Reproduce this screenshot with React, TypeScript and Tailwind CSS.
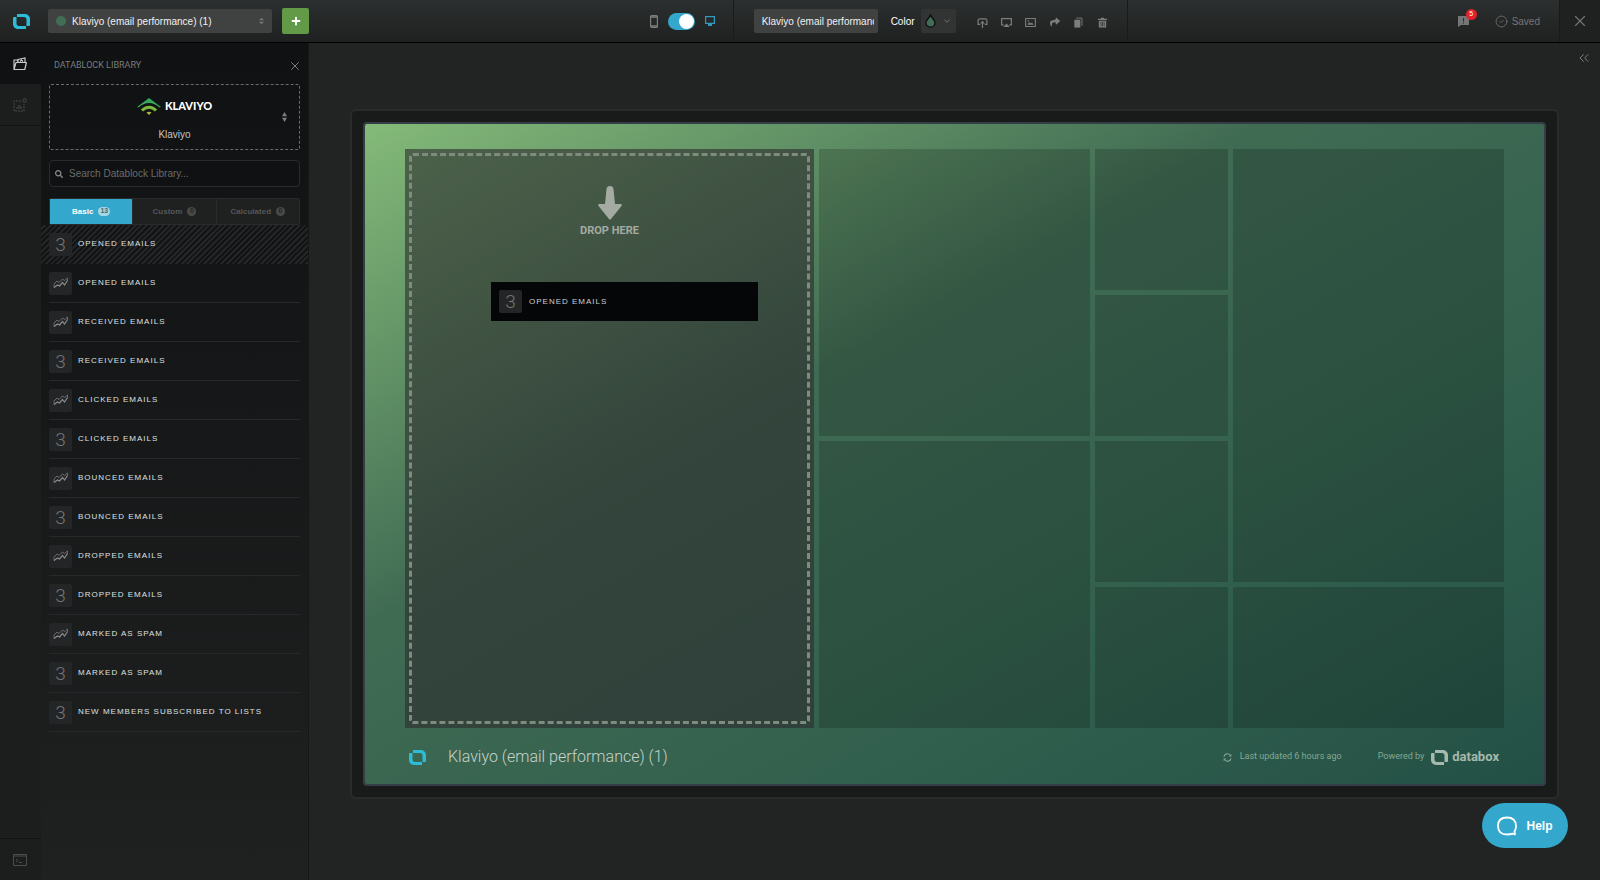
import { useState } from "react";
import { clsx } from "clsx";
import { ChevronDown, ChevronsLeft, CircleCheck, X } from "lucide-react";
import { FaPlus, FaSearch, FaShare } from "react-icons/fa";

type BlockType = "number" | "chart";

const datablocks: { type: BlockType; name: string }[] = [
  { type: "number", name: "Opened emails" },
  { type: "chart", name: "Opened emails" },
  { type: "chart", name: "Received emails" },
  { type: "number", name: "Received emails" },
  { type: "chart", name: "Clicked emails" },
  { type: "number", name: "Clicked emails" },
  { type: "chart", name: "Bounced emails" },
  { type: "number", name: "Bounced emails" },
  { type: "chart", name: "Dropped emails" },
  { type: "number", name: "Dropped emails" },
  { type: "chart", name: "Marked as spam" },
  { type: "number", name: "Marked as spam" },
  { type: "number", name: "New members subscribed to lists" },
];

const tabs = [
  { name: "Basic", count: 13 },
  { name: "Custom", count: 0 },
  { name: "Calculated", count: 0 },
];

const tiles = [
  "col-span-2 row-span-2",
  "",
  "col-span-2 row-span-3",
  "",
  "col-span-2 row-span-2",
  "",
  "",
  "col-span-2",
];

const DataboxLogo = ({ className }: { className?: string }) => (
  <svg viewBox="0 0 34 30" className={className} fill="currentColor" aria-hidden="true">
    <path d="M8 0h15c6 0 11 4 11 10v12c0 1-1 2-2 2h-5V11c0-3-2-5-5-5H8z" />
    <path d="M8 6H2C1 6 0 7 0 8v12c0 6 5 10 11 10h15v-6H12c-3 0-5-2-5-5V6z" />
  </svg>
);

const BlockIcon = ({ type }: { type: BlockType }) => (
  <span className="flex size-[23px] shrink-0 items-center justify-center rounded-xs bg-[#232526] text-[#8b8d8d]">
    {type === "number" ? (
      <span className="font-[Roboto] text-[19px] leading-[21px] font-light text-[#747676]">3</span>
    ) : (
      <svg viewBox="0 0 16 12" className="h-3 w-4" fill="none" stroke="currentColor">
        <path d="M1 7l3-3 2 1.500L9.500 2l2 1.500L14.500 1" strokeWidth="0.700" />
        <path d="M1 10.500L4.500 8l2 1 3-3.500 2 2.500L14.500 3.500" strokeWidth="1.200" />
        <path d="M1 7v3.500M14.500 1v3" strokeWidth="0.600" />
      </svg>
    )}
  </span>
);

const toolIcons = [
  {
    label: "Publish",
    icon: (
      <svg viewBox="0 0 12 12" className="size-[11px]" fill="none" stroke="currentColor" strokeWidth="1.300">
        <path d="M3.500 8H1.200V3.200L2.500 2h7l1.300 1.200V8H8.500M6 12V5.500" />
        <path d="M6 4l2.500 3h-5z" fill="currentColor" stroke="none" />
      </svg>
    ),
  },
  {
    label: "Cast",
    icon: (
      <svg viewBox="0 0 12 12" className="size-[11px]" fill="none" stroke="currentColor" strokeWidth="1.300">
        <path d="M3 8.500H.7V1.700h10.600v6.800H9" />
        <path d="M6 7l3.500 4h-7z" fill="currentColor" stroke="none" />
      </svg>
    ),
  },
  {
    label: "Snapshot",
    icon: (
      <svg viewBox="0 0 12 12" className="size-[11px]" fill="none" stroke="currentColor">
        <path d="M.7 1.700h10.600v8.600H.7z" strokeWidth="1.200" />
        <path d="M2.500 8.500l2-3 1.500 1.500 1.500-1 2 2.500zM3 3.500h1.500V5H3z" fill="currentColor" stroke="none" />
      </svg>
    ),
  },
  { label: "Share", icon: <FaShare size={10} /> },
  {
    label: "Duplicate",
    icon: (
      <svg viewBox="0 0 12 12" className="size-[11px]" fill="currentColor">
        <path d="M1.500 3h6.500v8.500H1.500z" />
        <path d="M3.500 1.200h6.300v8.300" fill="none" stroke="currentColor" />
      </svg>
    ),
  },
  {
    label: "Delete",
    icon: (
      <svg viewBox="0 0 12 12" className="size-[11px]" fill="currentColor">
        <path d="M1 2h3l.5-1.300h3L8 2h3v1.300H1z" />
        <path fillRule="evenodd" d="M2 4h8v7.500H2zM4 5.300V10h.7V5.300zM5.700 5.300V10h.7V5.300zM7.400 5.300V10h.7V5.300z" />
      </svg>
    ),
  },
];

const Header = () => {
  const [title, setTitle] = useState("Klaviyo (email performance) (1)");
  const [desktop, setDesktop] = useState(true);

  return (
    <header className="flex h-[43px] shrink-0 items-stretch border-b border-black bg-linear-to-b from-[#2c2f2f] to-[#1f2121]">
      <div className="flex flex-[11] items-center">
        <a href="#" aria-label="Databox" className="ml-[13px] text-[#2cbcd8]">
          <DataboxLogo className="h-[15px] w-[17px]" />
        </a>
        <label className="ml-[18px] flex h-6 w-56 items-center rounded-xs bg-[#404141] px-2">
          <span className="size-[10px] shrink-0 rounded-full bg-[#416f55]" />
          <select aria-label="Databoard" className="ml-[6px] flex-1 appearance-none bg-transparent text-[10px] text-[#f0f1f1] outline-none">
            <option>Klaviyo (email performance) (1)</option>
          </select>
          <svg viewBox="0 0 6 8" className="h-2 w-[5px]" fill="#777">
            <path d="M3 0l3 3H0zM3 8l3-3H0z" />
          </svg>
        </label>
        <button aria-label="Add databoard" className="ml-[10px] flex h-[26px] w-[27px] items-center justify-center rounded-xs bg-[#629a48] text-white">
          <FaPlus size={10} />
        </button>
      </div>
      <div className="flex items-center gap-[10px] pr-[18px] text-[#7c7e7e]">
        <svg viewBox="0 0 8 13" className="h-[13px] w-2" fill="none" stroke="currentColor">
          <rect x=".6" y=".6" width="6.800" height="11.800" rx="1" strokeWidth="1.200" />
          <path d="M.6 2h6.800M.6 11h6.800" strokeWidth="1.500" />
        </svg>
        <label className="flex h-[17px] w-[27px] cursor-pointer items-center rounded-full bg-[#33a7cc]">
          <input
            type="checkbox"
            aria-label="Desktop layout"
            className="sr-only"
            checked={desktop}
            onChange={(e) => setDesktop(e.target.checked)}
          />
          <span className={clsx("size-[15px] rounded-full bg-white", desktop && "ml-[11px]")} />
        </label>
        <svg viewBox="0 0 10 10" className="size-[10px] text-[#2f9cbf]" fill="none" stroke="currentColor">
          <path d="M.6.600h8.800v6.800H.6z" strokeWidth="1.200" />
          <path d="M3 9h4" strokeWidth="2" />
        </svg>
      </div>
      <div className="flex items-center border-x border-[#191b1b] pr-3 pl-5 text-[#7c7e7e]">
        <input
          aria-label="Databoard title"
          value={title}
          onChange={(e) => setTitle(e.target.value)}
          className="h-6 w-[124px] rounded-xs bg-[#404141] pr-1 pl-2 text-[10px] text-[#f0f1f1] outline-none"
        />
        <span className="ml-[13px] text-[10px] text-white">Color</span>
        <button aria-label="Board color" className="ml-[6px] flex h-6 w-[35px] items-center justify-center gap-[6px] rounded-xs bg-[#323434]">
          <svg viewBox="0 0 12 15" className="h-[14px] w-[11px]" fill="#3f6d55" stroke="#0b0d0d" strokeWidth="1.400">
            <path d="M6 1c1 3 5 5 5 8.500a5 4.700 0 0 1-10 0C1 6 5 4 6 1z" />
          </svg>
          <ChevronDown size={10} />
        </button>
        <div className="ml-[15px] flex items-center pt-[2px]">
          {toolIcons.map((tool) => (
            <button key={tool.label} aria-label={tool.label} className="flex h-6 w-6 items-center justify-center">
              {tool.icon}
            </button>
          ))}
        </div>
      </div>
      <div className="flex flex-[8] items-center justify-end text-[#747676]">
        <button aria-label="Announcements" className="relative mr-[25px]">
          <svg viewBox="0 0 12 12" className="size-3" fill="currentColor">
            <path d="M0 1h11v9H3l-3 2z" />
            <path d="M5.500 3v3.500M5.500 7.500v1" stroke="#2a2c2c" />
          </svg>
          <span className="absolute -top-[6px] left-2 flex size-[11px] items-center justify-center rounded-full bg-[#e3202b] text-[7px] text-white">5</span>
        </button>
        <span className="mr-[19px] flex items-center gap-1 text-[10px]">
          <CircleCheck size={13} strokeWidth={1.5} />
          Saved
        </span>
        <button aria-label="Close" className="flex w-[41px] items-center justify-center self-stretch border-l border-[#181a1a] bg-[#1f2121]">
          <X size={18} strokeWidth={1.5} />
        </button>
      </div>
    </header>
  );
};

const Rail = () => (
  <nav className="flex w-[41px] shrink-0 flex-col bg-[#1c1e1e] text-[#4a4c4c]">
    <button aria-label="Datablock library" className="flex h-[41px] items-center justify-center bg-[#0f1112] pr-[2px] text-[#c9caca]">
      <svg viewBox="0 0 14 14" className="size-[14px]" fill="none" stroke="currentColor" strokeWidth="1.200">
        <path d="M1 12.500V3h3l1 1.500M1 12.500L3 5.500h10.400l-1.600 7z" strokeLinejoin="round" />
        <path d="M5 5V2.500L12 1v4M7 4.500l1.500-1.500L10 4.500" />
      </svg>
    </button>
    <button aria-label="Edit datablock" className="flex h-[42px] items-center justify-center border-b border-[#111313] pr-[2px]">
      <svg viewBox="0 0 14 14" className="size-[14px]" fill="none" stroke="currentColor">
        <path d="M8 3H1v10h10V6" strokeDasharray="2 1" />
        <path d="M4 11V9M6 11V7M8 11V8" />
        <circle cx="11.500" cy="2.500" r="1.700" />
      </svg>
    </button>
    <button aria-label="Query builder" className="mt-auto flex h-[42px] items-center justify-center border-t border-[#111313] pr-[2px]">
      <svg viewBox="0 0 14 12" className="h-3 w-[14px]" fill="none" stroke="currentColor">
        <path d="M.5.5h13v11H.5zM.5 2h13" />
        <path d="M3 5l2 1.500L3 8M6 8.500h3" />
      </svg>
    </button>
  </nav>
);

const Library = () => {
  const [tab, setTab] = useState("Basic");

  return (
    <aside className="flex w-[268px] shrink-0 flex-col border-r border-[#151717] bg-linear-to-b from-[#0f1112] to-[#1f2121]">
      <div className="flex h-[41px] items-center justify-between pt-1 pr-[6px] pl-[13px]">
        <h2 className="font-[Roboto] text-[9px] text-[#7a7c7c]">DATABLOCK LIBRARY</h2>
        <button aria-label="Close library" className="text-[#8c8e8e]">
          <X size={14} strokeWidth={1.5} />
        </button>
      </div>
      <button className="mx-2 flex h-[66px] items-center rounded-xs border border-dashed border-[#6a6c6c] pr-3 pl-[17px] text-[#7c7e7e]">
        <span className="flex flex-1 flex-col items-center gap-3 pt-[6px]">
          <span className="flex items-center gap-1">
            <svg viewBox="0 0 24 17" className="h-[17px] w-6" fill="none">
              <path d="M0 9L12 0l12 9-1.500.5C16 3.500 8 3.500 1.500 9.500z" fill="#35a85a" />
              <path d="M5 12.500c4-4.500 10-4.500 14 0" stroke="#7db93d" strokeWidth="3" />
              <path d="M9.500 14.500c1.500-1 3.500-1 5 0L12 17z" fill="#b5b835" />
            </svg>
            <span className="font-[Lato] text-[11px] leading-4 font-black text-white">KLAVIYO</span>
          </span>
          <span className="text-[10px] leading-4 text-[#c5c6c6]">Klaviyo</span>
        </span>
        <svg viewBox="0 0 6 12" className="h-3 w-[5px]" fill="currentColor">
          <path d="M3 0l3 5H0zM3 12l3-5H0z" />
        </svg>
      </button>
      <label className="mx-2 mt-[10px] flex h-[27px] items-center gap-[6px] rounded-sm border border-[#2a2c2c] bg-[#0f1112] px-[5px] text-[#8b8d8d]">
        <FaSearch size={8} />
        <input placeholder="Search Datablock Library..." aria-label="Search" className="flex-1 bg-transparent text-[10px] outline-none placeholder:text-[#6a6c6c]" />
      </label>
      <div className="mx-2 mt-[11px] flex h-[27px] rounded-xs border border-[#2a2c2c] bg-[#1f2121]">
        {tabs.map((t) => (
          <button
            key={t.name}
            onClick={() => setTab(t.name)}
            className={clsx(
              "flex flex-1 items-center justify-center gap-[5px] text-[8px] font-bold",
              tab === t.name ? "bg-[#33a7cc] text-white" : "border-l border-[#2a2c2c] text-[#555757]",
            )}
          >
            {t.name}
            <span
              className={clsx(
                "flex h-[9px] items-center justify-center rounded-full text-[7px]",
                tab === t.name ? "w-3 bg-[#a5d7e6] text-[#4a6a70]" : "w-[9px] bg-[#484a4a] text-[#222]",
              )}
            >
              {t.count}
            </span>
          </button>
        ))}
      </div>
      <ul>
        {datablocks.map((block, i) => (
          <li
            key={i}
            className={clsx(
              "flex h-[39px] px-2",
              i === 0 && "bg-[repeating-linear-gradient(135deg,#111314_0_2px,#232526_2px_4px)]",
            )}
          >
            <div className={clsx("flex flex-1 items-center gap-[6px] border-b", i === 0 ? "border-transparent" : "border-[#26282a]")}>
              <BlockIcon type={block.type} />
              <span className="text-[8px] tracking-[1px] text-[#dfe0e0] uppercase">{block.name}</span>
            </div>
          </li>
        ))}
      </ul>
    </aside>
  );
};

const Board = () => (
  <div className="mx-[41px] rounded-md border-2 border-[#292b2b] bg-[#191b1b] p-[11px]">
    <div className="rounded-sm border-2 border-[#353d46] bg-[linear-gradient(to_bottom_right,#84ba79_0%,#406b53_38%,#32604e_70%,#235045_100%)] px-10 pt-[25px] font-[Roboto]">
      <div className="grid aspect-[1099/579] grid-flow-row grid-cols-8 grid-rows-4 gap-[5px]">
        <div className="relative col-span-3 row-span-4 flex flex-col bg-[#2b2b2d]/60 p-1">
          <div className="flex flex-1 flex-col items-center rounded-sm border-[3px] border-dashed border-[#7f8b7f] pt-[30px] text-[#a3aba3]">
            <svg viewBox="0 0 24 34" className="h-[34px] w-6" fill="currentColor">
              <path d="M8.500 3c0-4 7-4 7 0L17 18h6c1 0 1 1 .5 2L13 33c-.7.800-1.300.800-2 0L.500 20C0 19 0 18 1 18h6z" />
            </svg>
            <span className="mt-[3px] text-[11px] font-bold">DROP HERE</span>
          </div>
          <div className="absolute top-[133px] left-[86px] flex h-[39px] w-[267px] items-center gap-[7px] bg-[#050607] px-2 font-['Liberation_Sans']">
            <BlockIcon type="number" />
            <span className="text-[8px] tracking-[1px] text-[#cfd0d0] uppercase">Opened emails</span>
          </div>
        </div>
        {tiles.map((span, i) => (
          <div key={i} className={clsx("bg-black/18", span)} />
        ))}
      </div>
      <footer className="flex h-14 items-center pt-[2px] text-[#85a892]">
        <DataboxLogo className="ml-1 h-[15px] w-[17px] text-[#2cbcd8]" />
        <h1 className="ml-[22px] flex-1 text-[16px] font-light text-[#c9d2cb]">Klaviyo (email performance) (1)</h1>
        <svg viewBox="0 0 10 10" className="size-[9px]" fill="none" stroke="currentColor" strokeWidth="1.200">
          <path d="M1 4a4 4 0 0 1 7.300-1.200M9 6a4 4 0 0 1-7.300 1.200" />
          <path d="M9.300 1v3h-3zM.7 9V6h3z" fill="currentColor" stroke="none" />
        </svg>
        <span className="ml-2 text-[9px]">Last updated 6 hours ago</span>
        <span className="ml-9 text-[9px]">Powered by</span>
        <DataboxLogo className="ml-[7px] h-[15px] w-[17px] text-[#a5b9ad]" />
        <span className="mr-[5px] ml-1 text-[13px] font-bold text-[#a5b9ad]">databox</span>
      </footer>
    </div>
  </div>
);

const App = () => (
  <div className="flex min-h-screen flex-col bg-[#222424] font-['Liberation_Sans',Arial,sans-serif]">
    <Header />
    <div className="flex flex-1">
      <Rail />
      <Library />
      <main className="flex-1">
        <div className="flex h-[66px] items-start justify-end pt-[7px] pr-2 text-[#7c7e7e]">
          <button aria-label="Expand panel">
            <ChevronsLeft size={16} strokeWidth={1.5} />
          </button>
        </div>
        <Board />
      </main>
    </div>
    <button className="fixed right-8 bottom-8 flex h-[45px] w-[86px] items-center justify-center gap-[9px] rounded-full bg-[#33a7cc] text-[12px] font-bold text-white">
      <svg viewBox="0 0 20 20" className="size-5" fill="none" stroke="currentColor" strokeWidth="1.800">
        <path d="M18 18.500l-2.500-.8c-1.500.6-3 .8-5.500.8-6 0-9-3-9-8.500S4 1.500 10 1.500 19 4.500 19 10c0 2.500-.5 4-1.500 5.500z" strokeLinejoin="round" />
      </svg>
      Help
    </button>
  </div>
);

export default App;
